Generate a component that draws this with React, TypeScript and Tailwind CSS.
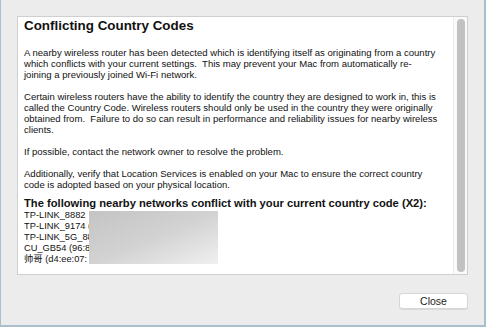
const networks = [
  { name: "TP-LINK_8882", tail: "" },
  { name: "TP-LINK_9174", tail: " (" },
  { name: "TP-LINK_5G_88", tail: "" },
  { name: "CU_GB54", tail: " (96:8" },
  { name: "帅哥", tail: " (d4:ee:07:" },
];

export default function App() {
  return (
    <div
      className="w-[486px] h-[327px] bg-[#ececec] border-l border-r-2 border-b-2 border-[#a9bfcd] flex flex-col pl-4 pr-[16px] pt-4 text-[#111]"
      style={{ fontFamily: '"Liberation Sans", "Noto Sans CJK SC", sans-serif' }}
    >
      {/* Scroll panel */}
      <div className="h-[259px] bg-white border border-[#cfcfcf] flex">
        <div className="flex-1 pl-[6px] pt-[1px] overflow-hidden">
          <h1 className="text-[13.4px] font-bold leading-[16px] mb-[13px]">Conflicting Country Codes</h1>

          <div className="text-[9.55px] leading-[11px] flex flex-col gap-[11px] whitespace-nowrap">
            <p>
              A nearby wireless router has been detected which is identifying itself as originating from a country
              <br />
              which conflicts with your current settings.&nbsp; This may prevent your Mac from automatically re-
              <br />
              joining a previously joined Wi-Fi network.
            </p>
            <p>
              Certain wireless routers have the ability to identify the country they are designed to work in, this is
              <br />
              called the Country Code. Wireless routers should only be used in the country they were originally
              <br />
              obtained from.&nbsp; Failure to do so can result in performance and reliability issues for nearby wireless
              <br />
              clients.
            </p>
            <p>If possible, contact the network owner to resolve the problem.</p>
            <p>
              Additionally, verify that Location Services is enabled on your Mac to ensure the correct country
              <br />
              code is adopted based on your physical location.
            </p>
          </div>

          <h2 className="text-[11.2px] font-bold leading-[13px] mt-[7px] whitespace-nowrap">
            The following nearby networks conflict with your current country code (X2):
          </h2>

          <div className="relative text-[9.3px] leading-[11px] whitespace-nowrap">
            {networks.map((n) => (
              <p key={n.name}>
                {n.name}
                {n.tail}
              </p>
            ))}
            {/* blurred addresses */}
            <div className="absolute left-[65px] top-[1px] w-[129px] h-[53px] bg-gradient-to-br from-[#c4c4c4] via-[#d2d2d2] to-[#f0f0f0]" />
          </div>
        </div>

        {/* Scrollbar */}
        <div className="w-[14px] border-l border-[#ededed] bg-[#fafafa] flex justify-center py-[2px]">
          <div className="w-[8px] h-full rounded-full bg-[#c1c1c1]" />
        </div>
      </div>

      <div className="flex justify-end mt-[18px]">
        <button className="w-[69px] h-[16px] bg-white rounded-[3px] border border-[#d6d6d6] shadow-[0_1px_0_rgba(0,0,0,0.08)] text-[10.5px] leading-[14px] text-[#222]">
          Close
        </button>
      </div>
    </div>
  );
}
